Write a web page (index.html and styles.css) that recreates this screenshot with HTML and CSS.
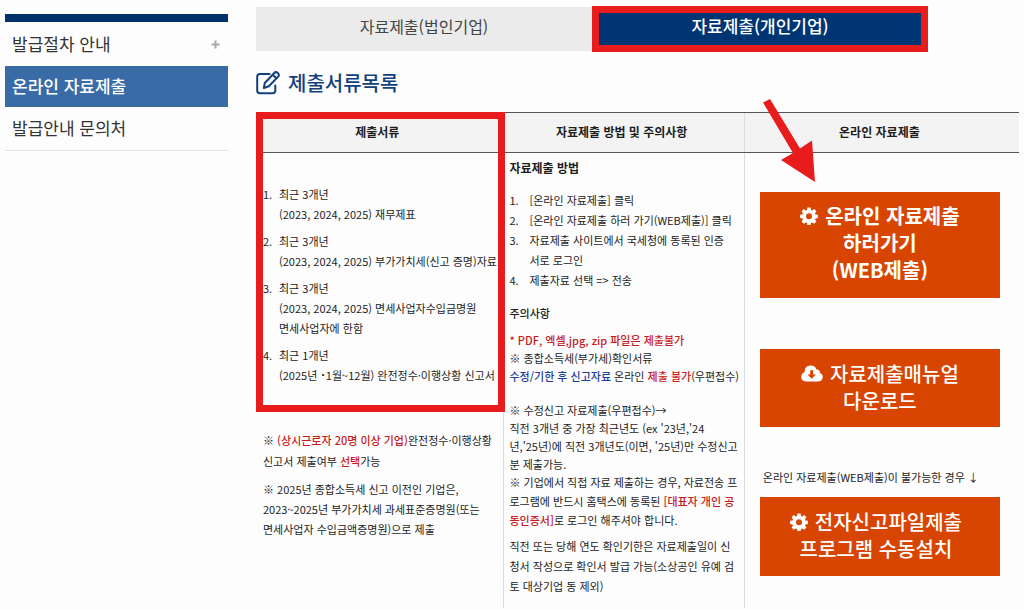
FILE: index.html
```html
<!DOCTYPE html>
<html lang="ko">
<head>
<meta charset="utf-8">
<meta name="viewport" content="width=device-width, initial-scale=1">
<title>온라인 자료제출</title>
<link rel="stylesheet" href="styles.css">
</head>
<body>
<svg class="sprite" aria-hidden="true">
  <symbol id="gear" viewBox="0 0 18 18">
    <path fill-rule="evenodd" d="M7.4 0.5h3.2l.4 2.4 1.2.5 2-1.4 2.2 2.2-1.4 2 .5 1.2 2.4.4v3.2l-2.4.4-.5 1.2 1.4 2-2.2 2.2-2-1.4-1.2.5-.4 2.4H7.4L7 15.900l-1.200-.5-2 1.400-2.200-2.200 1.400-2-.5-1.200L.1 11V7.800l2.400-.4.5-1.200-1.400-2L3.800 2l2 1.400L7 2.900zM9 6.200a3 3 0 1 0 0 6 3 3 0 0 0 0-6z"/>
  </symbol>
</svg>
<div class="page">
  <nav class="side" aria-label="발급 메뉴">
    <a class="side-link" href="#guide">발급절차 안내 <svg class="plus" viewBox="0 0 9 9" aria-hidden="true"><path d="M4.500 0.500v8M0.500 4.500h8"/></svg></a>
    <a class="side-link active" href="#online" aria-current="page">온라인 자료제출</a>
    <a class="side-link last" href="#contact">발급안내 문의처</a>
  </nav>
  <main class="content">
    <nav class="tabs" aria-label="기업 구분">
      <a class="tab" href="#corp">자료제출(법인기업)</a>
      <a class="tab selected" href="#personal" aria-current="true">자료제출(개인기업)</a>
    </nav>
    <h1 class="title">
      <svg class="edit" viewBox="0 0 24 24" aria-hidden="true"><path d="M13.500 3H4Q1.200 3 1.200 5.800V19.500Q1.200 22.300 4 22.300H16.500Q19.300 22.300 19.300 19.500V14.500M18 2.200Q19.700.3 21.500 1.700 23.900 3.500 22.200 5.600L12.800 15.200 7.800 17 8.800 12ZM16.600 3.700l3.900 3.600"/></svg>
      제출서류목록
    </h1>
    <div class="table-area">
      <table class="docs">
        <thead>
          <tr><th class="col-docs">제출서류</th><th class="col-how">자료제출 방법 및 주의사항</th><th class="col-online">온라인 자료제출</th></tr>
        </thead>
        <tbody>
          <tr>
            <td class="cell-docs">
              <ol class="doc-list">
                <li>최근 3개년<br>(2023, 2024, 2025) 재무제표</li>
                <li>최근 3개년<br>(2023, 2024, 2025) 부가가치세(신고 증명)자료</li>
                <li>최근 3개년<br>(2023, 2024, 2025) 면세사업자수입금명원<br>면세사업자에 한함</li>
                <li>최근 1개년<br>(2025년 ˙1월~12월) 완전정수·이행상황 신고서</li>
              </ol>
              <p class="note loose">※ <strong class="red">(상시근로자 20명 이상 기업)</strong>완전정수·이행상황<br>신고서 제출여부 <strong class="red">선택</strong>가능</p>
              <p class="note">※ 2025년 종합소득세 신고 이전인 기업은,<br>2023~2025년 부가가치세 과세표준증명원(또는<br>면세사업자 수입금액증명원)으로 제출</p>
            </td>
            <td class="cell-how">
              <h2 class="subhead">자료제출 방법</h2>
              <ol class="steps">
                <li>[온라인 자료제출] 클릭</li>
                <li>[온라인 자료제출 하러 가기(WEB제출)] 클릭</li>
                <li>자료제출 사이트에서 국세청에 동록된 인증<br>서로 로그인</li>
                <li>제출자료 선택 =&gt; 전송</li>
              </ol>
              <h2 class="caution">주의사항</h2>
              <p class="tight"><span class="red">* PDF, 엑셀,jpg, zip 파일은 제출불가</span><br>※ 종합소득세(부가세)확인서류<br><span class="blue">수정/기한 후 신고자료</span> 온라인 <span class="red">제출 불가</span>(우편접수)</p>
              <p class="tight gap">※ 수정신고 자료제출(우편접수)→<br>직전 3개년 중 가장 최근년도 (ex '23년,'24<br>년,'25년)에 직전 3개년도(이면, '25년)만 수정신고<br>분 제출가능.</p>
              <p class="medium">※ 기업에서 직접 자료 제출하는 경우, 자료전송 프<br>로그램에 반드시 홈택스에 동록된 <strong class="red">[대표자 개인 공<br>동인증서]</strong>로 로그인 해주셔야 합니다.</p>
              <p class="closing">직전 또는 당해 연도 확인기한은 자료제출일이 신<br>청서 작성으로 확인서 발급 가능(소상공인 유예 검<br>토 대상기업 동 제외)</p>
            </td>
            <td class="cell-online">
              <a class="btn strong" href="#web"><svg class="icon" aria-hidden="true"><use href="#gear"/></svg>온라인 자료제출<br>하러가기<br>(WEB제출)</a>
              <a class="btn manual" href="#manual"><svg class="icon cloud" viewBox="0 0 22 17" aria-hidden="true"><path fill-rule="evenodd" d="M5 16.500Q0 16 .2 11.500.5 8.300 3.500 7.200 3.200 1 9.500.5 14.300.5 15.500 4.500 19 4.200 19 8 21.800 9 21.800 12 21.500 16 17.500 16.500ZM9.200 5.200V9.400H6.400L10.700 13.700 15 9.400H12.200V5.200Z"/></svg>자료제출매뉴얼<br>다운로드</a>
              <p class="fallback">온라인 자료제출(WEB제출)이 불가능한 경우 ↓</p>
              <a class="btn install" href="#install"><svg class="icon" aria-hidden="true"><use href="#gear"/></svg>전자신고파일제출<br>프로그램 수동설치</a>
            </td>
          </tr>
        </tbody>
      </table>
      <div class="marker"></div>
      <svg class="arrow" viewBox="0 0 54 84" aria-hidden="true"><path d="M1 3.500 8 0 38 49.500 50 41.500 53 83 19 61 31 54Z"/></svg>
    </div>
  </main>
</div>
</body>
</html>
```
FILE: styles.css
```css
* { box-sizing: border-box; }
body {
  margin: 0;
  background: #fdfdfd;
  color: #1c1c1c;
  font: 11px/20px "Noto Sans CJK KR", sans-serif;
}
h1, h2, p, ol { margin: 0; padding: 0; }
a { color: inherit; text-decoration: none; }
.sprite { position: absolute; width: 0; height: 0; }

.page {
  display: grid;
  grid-template-columns: 223px 1fr;
  gap: 28px;
  padding: 6px 5px 0;
}

.side { margin-top: 8px; align-self: start; border-top: 8px solid #00306b; }
.side-link {
  display: flex;
  align-items: center;
  justify-content: space-between;
  padding: 9px 8px 9px 7px;
  font-size: 17px;
  line-height: 26px;
  color: #333;
}
.side-link.active { padding-top: 7px; padding-bottom: 8px; background: #396ca6; color: #fff; font-weight: 500; }
.side-link.last { padding-top: 8px; border-bottom: 1px solid #e3e3e3; }
.plus { width: 9px; height: 9px; fill: none; stroke: #aaa; stroke-width: 2; }

.tabs { display: grid; grid-template-columns: 1fr 1fr; align-items: center; padding-right: 91px; }
.tab {
  padding: 7px 0 13px;
  background: #ebebeb;
  color: #444;
  font-size: 16px;
  line-height: 24px;
  text-align: center;
}
.tab.selected {
  padding: 1px 0 7px;
  border: 7px solid #e81c1c;
  background: #003574;
  color: #fff;
  font-size: 17px;
  font-weight: 500;
}

.title {
  display: flex;
  align-items: center;
  gap: 8px;
  padding: 16px 0 14px;
  color: #123f7d;
  font-size: 20px;
  font-weight: 500;
  line-height: 30px;
}
.edit { width: 24px; height: 24px; fill: none; stroke: #123f7d; stroke-width: 2; stroke-linejoin: round; stroke-linecap: round; }

.table-area { position: relative; }
.docs { width: 100%; border-collapse: collapse; table-layout: fixed; }
.docs th {
  padding: 9px 5px 10px 0;
  border-top: 1px solid #555;
  border-bottom: 1px solid #555;
  background: #f3f3f3;
  font-size: 12px;
  font-weight: 700;
}
.docs th + th, .docs td + td { border-left: 1px solid #ddd; }
.col-docs { width: 32.500%; }
.col-how { width: 31.500%; }
.docs td { padding: 0; vertical-align: top; }

.docs .cell-docs { padding: 31px 0 0 7px; }
.doc-list, .steps { list-style: none; counter-reset: item; }
.doc-list li, .steps li { counter-increment: item; position: relative; white-space: nowrap; }
.doc-list li { padding-left: 16px; z-index: 1; }
.steps li { padding-left: 20px; }
.doc-list li::before, .steps li::before { content: counter(item) "."; position: absolute; left: 0; }
.doc-list li + li { margin-top: 7px; }
.note { margin-top: 7px; white-space: nowrap; }
.note.loose { margin-top: 45px; line-height: 21px; }

.docs .cell-how { padding: 5px 0 12px 5px; white-space: nowrap; }
.subhead { font-size: 12px; font-weight: 700; }
.steps { margin-top: 12px; }
.caution { margin-top: 13px; font-size: 11px; font-weight: 500; }
.tight { margin-top: 8px; line-height: 18px; }
.tight.gap { margin-top: 16px; }
.medium { line-height: 19px; }
.closing { margin-top: 6px; }
.red { color: #c81a20; font-weight: 500; }
.blue { color: #1c3c9c; font-weight: 500; }

.docs .cell-online { padding: 39px 19px 0 15px; }
.btn {
  display: block;
  padding: 11px 0 13px;
  background: #d84500;
  color: #fff;
  font-size: 20px;
  font-weight: 500;
  line-height: 27px;
  text-align: center;
}
.btn.strong { padding: 10px 0 15px; font-weight: 700; }
.btn.manual { margin-top: 51px; }
.btn.install { padding-right: 8px; padding-bottom: 14px; }
.icon { width: 18px; height: 18px; margin-right: 7px; fill: #fff; vertical-align: -1px; }
.icon.cloud { width: 22px; height: 17px; vertical-align: 0; }
.fallback { margin: 40px 0 10px 3px; white-space: nowrap; }

.marker {
  position: absolute;
  top: 0;
  left: 0;
  width: 32.600%;
  height: 300px;
  border: 7px solid #e81c1c;
  pointer-events: none;
}
.arrow { position: absolute; top: -13px; left: 66.300%; width: 54px; height: 84px; fill: #e81c1c; }
```
